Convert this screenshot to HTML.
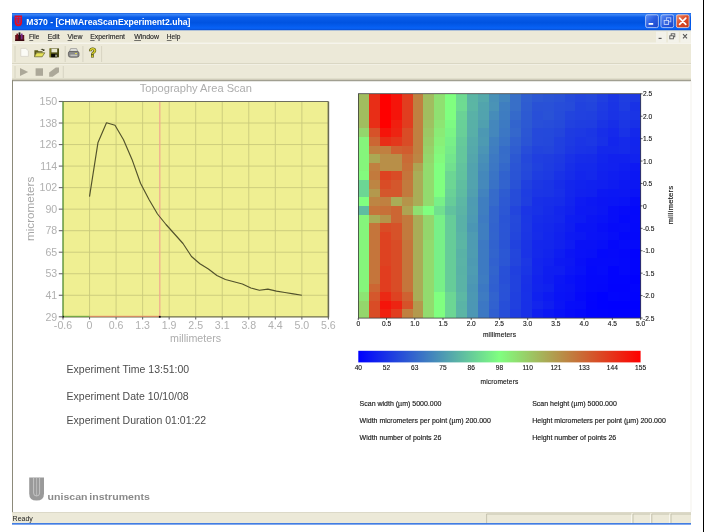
<!DOCTYPE html>
<html><head><meta charset="utf-8"><title>M370</title>
<style>
html,body{margin:0;padding:0;background:#fff;}
body{width:704px;height:532px;overflow:hidden;position:relative;font-family:"Liberation Sans",sans-serif;}
svg{position:absolute;left:0;top:0;display:block;filter:blur(0.5px);}
text{font-family:"Liberation Sans",sans-serif;}
</style></head><body>
<svg width="704" height="532" viewBox="0 0 704 532">
<defs>
<linearGradient id="tb" x1="0" y1="0" x2="0" y2="1">
<stop offset="0" stop-color="#1c64e0"/><stop offset="0.09" stop-color="#3a84f6"/><stop offset="0.24" stop-color="#0a5ce8"/>
<stop offset="0.55" stop-color="#0053e1"/><stop offset="0.86" stop-color="#0862f6"/><stop offset="1" stop-color="#0848c6"/>
</linearGradient>
<linearGradient id="bb" x1="0" y1="0" x2="1" y2="1">
<stop offset="0" stop-color="#5d8ff6"/><stop offset="0.5" stop-color="#2a5de0"/><stop offset="1" stop-color="#1c45c8"/>
</linearGradient>
<linearGradient id="rb" x1="0" y1="0" x2="1" y2="1">
<stop offset="0" stop-color="#f0906c"/><stop offset="0.5" stop-color="#dc4a26"/><stop offset="1" stop-color="#c43818"/>
</linearGradient>
<linearGradient id="cbar" x1="0" y1="0" x2="1" y2="0">
<stop offset="0" stop-color="#0000ff"/><stop offset="0.5" stop-color="#80ff80"/><stop offset="1" stop-color="#ff0000"/>
</linearGradient>
</defs>
<rect x="0" y="0" width="704" height="532" fill="#ffffff"/>
<!-- right black line -->
<!-- window chrome -->
<rect x="12" y="13" width="679" height="17.7" fill="url(#tb)"/>
<rect x="12" y="30.4" width="679" height="50.4" fill="#ece9d8"/>
<!-- title icon -->
<g>
<path d="M14.6,15.4 h7.5 v6.6 q0,4.2 -3.75,4.2 q-3.75,0 -3.75,-4.2 z" fill="#e40c22"/>
<path d="M16.9,18.6 v3.6 q0,1.6 1.5,1.6 q1.5,0 1.5,-1.6 v-3.6" fill="none" stroke="#3a4ed0" stroke-width="0.9"/>
<g fill="#5a50c8"><circle cx="16" cy="17.6" r="0.55"/><circle cx="17.6" cy="17.6" r="0.55"/><circle cx="19.2" cy="17.6" r="0.55"/><circle cx="20.8" cy="17.6" r="0.55"/></g>
</g>
<text x="26.2" y="24.9" font-size="9" font-weight="bold" fill="#ffffff" textLength="164.2" lengthAdjust="spacingAndGlyphs">M370 - [CHMAreaScanExperiment2.uha]</text>
<g>
<rect x="645.6" y="14.8" width="12.8" height="12.8" rx="1.8" fill="url(#bb)" stroke="#c4d4f8" stroke-width="0.8"/>
<rect x="648.6" y="23" width="4.6" height="1.8" fill="#fff"/>
<rect x="660.9" y="14.8" width="12.8" height="12.8" rx="1.8" fill="url(#bb)" stroke="#c4d4f8" stroke-width="0.8"/>
<rect x="666.4" y="17.8" width="4.4" height="4" fill="none" stroke="#b4c8f6" stroke-width="0.9"/>
<rect x="664.2" y="20.4" width="4.4" height="4" fill="#3a68e0" stroke="#c8d8fa" stroke-width="0.9"/>
<rect x="676.3" y="14.8" width="12.8" height="12.8" rx="1.8" fill="url(#rb)" stroke="#f6dcd2" stroke-width="0.8"/>
<path d="M679.6,18.1 l6.2,6.2 M685.8,18.1 l-6.2,6.2" stroke="#fff" stroke-width="1.7" stroke-linecap="round"/>
</g>
<g>
<g>
<rect x="15.2" y="35" width="9" height="5.8" fill="#5c1018"/>
<rect x="16.4" y="33.6" width="1.8" height="6" fill="#7a1020"/>
<rect x="18.6" y="32.4" width="1.8" height="7" fill="#201018"/>
<rect x="20.8" y="33.6" width="1.8" height="6" fill="#7a2a8a"/>
<rect x="15.2" y="39.6" width="9" height="1.4" fill="#3a0810"/>
</g>
<g font-size="8" fill="#222" stroke="#333" stroke-width="0.15">
<text x="28.9" y="39.2" textLength="10.4" lengthAdjust="spacingAndGlyphs">File</text>
<text x="47.8" y="39.2" textLength="11.8" lengthAdjust="spacingAndGlyphs">Edit</text>
<text x="67.6" y="39.2" textLength="14.8" lengthAdjust="spacingAndGlyphs">View</text>
<text x="90.2" y="39.2" textLength="34.8" lengthAdjust="spacingAndGlyphs">Experiment</text>
<text x="134.2" y="39.2" textLength="24.8" lengthAdjust="spacingAndGlyphs">Window</text>
<text x="166.8" y="39.2" textLength="13.6" lengthAdjust="spacingAndGlyphs">Help</text>
</g>
<g stroke="#1c1c1c" stroke-width="0.6">
<line x1="29.4" y1="40.5" x2="33.2" y2="40.5"/><line x1="47.8" y1="40.5" x2="52" y2="40.5"/>
<line x1="67.6" y1="40.5" x2="72.2" y2="40.5"/><line x1="90.2" y1="40.5" x2="94.6" y2="40.5"/>
<line x1="134.2" y1="40.5" x2="141" y2="40.5"/><line x1="166.8" y1="40.5" x2="171.6" y2="40.5"/>
</g>
<g fill="#f3f2ea"><rect x="656" y="31.6" width="10.2" height="11"/><rect x="668" y="31.6" width="10.8" height="11"/><rect x="680.4" y="31.6" width="10.4" height="11"/></g>
<g stroke="#555" stroke-width="0.9" fill="none">
<line x1="658.6" y1="38.4" x2="661.6" y2="38.4" stroke-width="1.2"/>
<rect x="671.2" y="33.8" width="3.6" height="3"/><rect x="669.8" y="35.8" width="3.6" height="3" fill="#f3f2ea"/>
<path d="M683,34.2 l4,4.2 M687,34.2 l-4,4.2" stroke-width="1.1"/>
</g>
</g>
<g>
<rect x="12" y="42.6" width="679" height="1.2" fill="#f8f7f0"/>
<rect x="12" y="63.2" width="679" height="0.8" fill="#d6d2c0"/>
<rect x="12" y="64" width="679" height="0.8" fill="#f4f2e8"/>
<rect x="12" y="78.6" width="679" height="1.6" fill="#d0ccba"/>
<g stroke="#d2cebc" stroke-width="0.8">
<line x1="15" y1="46" x2="15" y2="62"/><line x1="15" y1="66" x2="15" y2="78"/>
<line x1="65.2" y1="46" x2="65.2" y2="62"/><line x1="82.9" y1="46" x2="82.9" y2="62"/><line x1="101.6" y1="46" x2="101.6" y2="62"/>
<line x1="63.3" y1="66" x2="63.3" y2="78"/>
</g>
<!-- new -->
<path d="M20.8,48.4 h5 l2.6,2.4 v5.6 h-7.6 z" fill="#fbfbf6" stroke="#d2d0c4" stroke-width="0.7"/>
<!-- open -->
<path d="M34.4,50.2 h3.4 l0.8,1 h4 v1.4 h-6 l-2.2,4.2 z" fill="#5a5a18"/>
<path d="M36.6,52.8 h8.2 l-2.6,4 h-7.8 z" fill="#e6e25a" stroke="#4a4a18" stroke-width="0.6"/>
<path d="M40.4,49.4 q2,-1.4 3.4,0.2 l0.6,-0.6 v2 h-2 l0.7,-0.7 q-1,-1 -2.7,-0.9 z" fill="#3a3a20"/>
<!-- save -->
<rect x="49.6" y="48.4" width="9.4" height="8.9" fill="#4a4a12"/>
<rect x="51.4" y="48.8" width="5.8" height="3.6" fill="#e8e8d0"/>
<rect x="51.2" y="54" width="6" height="3.3" fill="#0a0a04"/>
<rect x="55.4" y="54.6" width="1.3" height="2.2" fill="#d8d8c0"/>
<rect x="49.6" y="48.4" width="1.2" height="8.9" fill="#8a8a20"/>
<!-- print -->
<path d="M70.6,48.6 h6 l1.2,3 h-8.4 z" fill="#e4e4e0" stroke="#7c7c7c" stroke-width="0.6"/>
<path d="M68.4,53 q0,-1.6 1.6,-1.6 h7.2 q1.8,0 1.8,1.8 v2.4 q0,1.6 -2.2,1.6 h-6.2 q-2.2,0 -2.2,-1.8 z" fill="#8a8a8a" stroke="#4c4c4c" stroke-width="0.7"/>
<rect x="70.4" y="54.6" width="6.8" height="1.6" fill="#c4c4c0"/>
<rect x="75" y="53" width="2" height="1" fill="#e0d850"/>
<!-- help -->
<text x="92.7" y="57.3" font-size="12" font-weight="bold" fill="#d6cf2c" stroke="#4a4a14" stroke-width="1.1" paint-order="stroke" text-anchor="middle">?</text>
<!-- toolbar2 -->
<path d="M20,68 l8.2,4 l-8.2,4.1 z" fill="#aca899"/>
<rect x="35.6" y="68.3" width="7.4" height="7.5" fill="#aca899"/>
<path d="M49.2,72.4 l6.6,-4.8 h3.2 v4.6 l-6.4,4.6 h-3.4 z" fill="#aca899"/>
</g>
<!-- client -->
<rect x="12" y="80.4" width="679" height="432" fill="#ffffff"/>
<rect x="12" y="80.2" width="679" height="1" fill="#8c8a7a"/>
<rect x="12" y="80.2" width="1" height="432" fill="#8c8a7a"/>
<rect x="690.6" y="81" width="0.8" height="431" fill="#efeee6"/>
<!-- status bar -->
<rect x="12" y="512.2" width="679" height="11.4" fill="#ece9d8"/>
<rect x="12" y="523.1" width="679" height="1.5" fill="#2f70e2"/>
<g>
<rect x="12" y="512.2" width="679" height="0.8" fill="#d8d4c2"/>
<text x="12.6" y="521.2" font-size="7.5" fill="#1c1c1c" textLength="20.2" lengthAdjust="spacingAndGlyphs">Ready</text>
<g fill="none" stroke-width="0.8">
<path d="M486.6,523 V514 H631.2" stroke="#bdb9a6"/><path d="M633,523 V514 H650" stroke="#bdb9a6"/><path d="M651.8,523 V514 H669.2" stroke="#bdb9a6"/><path d="M671,523 V514 H691" stroke="#bdb9a6"/>
<path d="M631.6,514.6 V523" stroke="#fbfaf4"/><path d="M650.4,514.6 V523" stroke="#fbfaf4"/><path d="M669.6,514.6 V523" stroke="#fbfaf4"/>
</g>
</g>

<!-- line chart -->
<text x="195.8" y="91.9" font-size="11.1" fill="#adadad" text-anchor="middle">Topography Area Scan</text>
<rect x="63.0" y="101.5" width="265.4" height="215.3" fill="#efef92"/>
<g stroke="#c9c97c" stroke-width="0.9" fill="none">
<line x1="89.54" y1="101.50" x2="89.54" y2="316.80"/>
<line x1="63.00" y1="123.03" x2="328.40" y2="123.03"/>
<line x1="116.08" y1="101.50" x2="116.08" y2="316.80"/>
<line x1="63.00" y1="144.56" x2="328.40" y2="144.56"/>
<line x1="142.62" y1="101.50" x2="142.62" y2="316.80"/>
<line x1="63.00" y1="166.09" x2="328.40" y2="166.09"/>
<line x1="169.16" y1="101.50" x2="169.16" y2="316.80"/>
<line x1="63.00" y1="187.62" x2="328.40" y2="187.62"/>
<line x1="195.70" y1="101.50" x2="195.70" y2="316.80"/>
<line x1="63.00" y1="209.15" x2="328.40" y2="209.15"/>
<line x1="222.24" y1="101.50" x2="222.24" y2="316.80"/>
<line x1="63.00" y1="230.68" x2="328.40" y2="230.68"/>
<line x1="248.78" y1="101.50" x2="248.78" y2="316.80"/>
<line x1="63.00" y1="252.21" x2="328.40" y2="252.21"/>
<line x1="275.32" y1="101.50" x2="275.32" y2="316.80"/>
<line x1="63.00" y1="273.74" x2="328.40" y2="273.74"/>
<line x1="301.86" y1="101.50" x2="301.86" y2="316.80"/>
<line x1="63.00" y1="295.27" x2="328.40" y2="295.27"/>
</g>
<line x1="159.8" y1="101.5" x2="159.8" y2="316.8" stroke="#f0a890" stroke-width="1.2"/>
<polyline points="89.5,196.6 98.0,142.4 106.5,122.8 115.0,125.3 123.5,139.8 132.0,159.4 140.5,183.3 149.0,199.5 157.5,214.0 166.0,224.5 174.5,234.0 183.0,243.5 191.5,256.5 199.9,263.7 208.4,269.0 216.9,275.5 225.4,279.5 233.9,281.8 242.4,284.0 250.9,288.0 259.4,290.3 267.9,289.1 276.4,291.1 284.9,292.5 293.4,293.9 301.9,295.2" fill="none" stroke="#52522c" stroke-width="1.15" stroke-linejoin="round"/>
<!-- borders -->
<line x1="63.0" y1="101.5" x2="328.4" y2="101.5" stroke="#6e6e5e" stroke-width="1.2"/>
<line x1="328.4" y1="101.5" x2="328.4" y2="317.40000000000003" stroke="#6a6a52" stroke-width="1.6"/>
<line x1="63.0" y1="316.8" x2="328.4" y2="316.8" stroke="#6e6e48" stroke-width="1.3"/>
<line x1="63.0" y1="101.5" x2="63.0" y2="316.8" stroke="#4e8a2e" stroke-width="1.3"/>
<line x1="63.0" y1="316.3" x2="89.53999999999999" y2="316.3" stroke="#6cb040" stroke-width="0.9"/>
<line x1="89.53999999999999" y1="316.3" x2="159.8" y2="316.3" stroke="#ee8a68" stroke-width="0.9"/>
<rect x="62.1" y="315.9" width="1.8" height="1.8" fill="#111"/>
<rect x="158.9" y="315.9" width="1.8" height="1.8" fill="#111"/>
<g font-size="10.6" fill="#b0b0b0">
<text x="57.2" y="105.20" text-anchor="end">150</text>
<line x1="58.8" y1="101.50" x2="63" y2="101.50" stroke="#6a6a6a" stroke-width="1.1"/>
<text x="57.2" y="126.73" text-anchor="end">138</text>
<line x1="58.8" y1="123.03" x2="63" y2="123.03" stroke="#6a6a6a" stroke-width="1.1"/>
<text x="57.2" y="148.26" text-anchor="end">126</text>
<line x1="58.8" y1="144.56" x2="63" y2="144.56" stroke="#6a6a6a" stroke-width="1.1"/>
<text x="57.2" y="169.79" text-anchor="end">114</text>
<line x1="58.8" y1="166.09" x2="63" y2="166.09" stroke="#6a6a6a" stroke-width="1.1"/>
<text x="57.2" y="191.32" text-anchor="end">102</text>
<line x1="58.8" y1="187.62" x2="63" y2="187.62" stroke="#6a6a6a" stroke-width="1.1"/>
<text x="57.2" y="212.85" text-anchor="end">90</text>
<line x1="58.8" y1="209.15" x2="63" y2="209.15" stroke="#6a6a6a" stroke-width="1.1"/>
<text x="57.2" y="234.38" text-anchor="end">78</text>
<line x1="58.8" y1="230.68" x2="63" y2="230.68" stroke="#6a6a6a" stroke-width="1.1"/>
<text x="57.2" y="255.91" text-anchor="end">65</text>
<line x1="58.8" y1="252.21" x2="63" y2="252.21" stroke="#6a6a6a" stroke-width="1.1"/>
<text x="57.2" y="277.44" text-anchor="end">53</text>
<line x1="58.8" y1="273.74" x2="63" y2="273.74" stroke="#6a6a6a" stroke-width="1.1"/>
<text x="57.2" y="298.97" text-anchor="end">41</text>
<line x1="58.8" y1="295.27" x2="63" y2="295.27" stroke="#6a6a6a" stroke-width="1.1"/>
<text x="57.2" y="320.50" text-anchor="end">29</text>
<line x1="58.8" y1="316.80" x2="63" y2="316.80" stroke="#6a6a6a" stroke-width="1.1"/>
<text x="63.00" y="329.4" text-anchor="middle">-0.6</text>
<line x1="63.00" y1="317" x2="63.00" y2="319.4" stroke="#6a6a6a" stroke-width="1.1"/>
<text x="89.54" y="329.4" text-anchor="middle">0</text>
<line x1="89.54" y1="317" x2="89.54" y2="319.4" stroke="#6a6a6a" stroke-width="1.1"/>
<text x="116.08" y="329.4" text-anchor="middle">0.6</text>
<line x1="116.08" y1="317" x2="116.08" y2="319.4" stroke="#6a6a6a" stroke-width="1.1"/>
<text x="142.62" y="329.4" text-anchor="middle">1.3</text>
<line x1="142.62" y1="317" x2="142.62" y2="319.4" stroke="#6a6a6a" stroke-width="1.1"/>
<text x="169.16" y="329.4" text-anchor="middle">1.9</text>
<line x1="169.16" y1="317" x2="169.16" y2="319.4" stroke="#6a6a6a" stroke-width="1.1"/>
<text x="195.70" y="329.4" text-anchor="middle">2.5</text>
<line x1="195.70" y1="317" x2="195.70" y2="319.4" stroke="#6a6a6a" stroke-width="1.1"/>
<text x="222.24" y="329.4" text-anchor="middle">3.1</text>
<line x1="222.24" y1="317" x2="222.24" y2="319.4" stroke="#6a6a6a" stroke-width="1.1"/>
<text x="248.78" y="329.4" text-anchor="middle">3.8</text>
<line x1="248.78" y1="317" x2="248.78" y2="319.4" stroke="#6a6a6a" stroke-width="1.1"/>
<text x="275.32" y="329.4" text-anchor="middle">4.4</text>
<line x1="275.32" y1="317" x2="275.32" y2="319.4" stroke="#6a6a6a" stroke-width="1.1"/>
<text x="301.86" y="329.4" text-anchor="middle">5.0</text>
<line x1="301.86" y1="317" x2="301.86" y2="319.4" stroke="#6a6a6a" stroke-width="1.1"/>
<text x="328.40" y="329.4" text-anchor="middle">5.6</text>
<line x1="328.40" y1="317" x2="328.40" y2="319.4" stroke="#6a6a6a" stroke-width="1.1"/>
</g>
<text x="195.6" y="341.8" font-size="10.7" fill="#adadad" text-anchor="middle">millimeters</text>
<text transform="translate(34.2,208.9) rotate(-90)" font-size="11.7" fill="#a6a6a6" text-anchor="middle">micrometers</text>

<!-- heatmap -->
<g shape-rendering="crispEdges">
<rect x="358.30" y="93.80" width="11.16" height="8.92" fill="#a1bd5f"/>
<rect x="369.16" y="93.80" width="11.16" height="8.92" fill="#e82e17"/>
<rect x="380.02" y="93.80" width="11.16" height="8.92" fill="#ff0000"/>
<rect x="390.87" y="93.80" width="11.16" height="8.92" fill="#f5140a"/>
<rect x="401.73" y="93.80" width="11.16" height="8.92" fill="#e13d1f"/>
<rect x="412.59" y="93.80" width="11.16" height="8.92" fill="#c08040"/>
<rect x="423.45" y="93.80" width="11.16" height="8.92" fill="#a1bd5f"/>
<rect x="434.30" y="93.80" width="11.16" height="8.92" fill="#8fe071"/>
<rect x="445.16" y="93.80" width="11.16" height="8.92" fill="#80ff80"/>
<rect x="456.02" y="93.80" width="11.16" height="8.92" fill="#6eda92"/>
<rect x="466.88" y="93.80" width="11.16" height="8.92" fill="#5bb5a5"/>
<rect x="477.73" y="93.80" width="11.16" height="8.92" fill="#55a9ab"/>
<rect x="488.59" y="93.80" width="11.16" height="8.92" fill="#4991b7"/>
<rect x="499.45" y="93.80" width="11.16" height="8.92" fill="#4385bd"/>
<rect x="510.31" y="93.80" width="11.16" height="8.92" fill="#386fc8"/>
<rect x="521.17" y="93.80" width="11.16" height="8.92" fill="#2f5ed0"/>
<rect x="532.02" y="93.80" width="11.16" height="8.92" fill="#2c57d4"/>
<rect x="542.88" y="93.80" width="11.16" height="8.92" fill="#2a54d5"/>
<rect x="553.74" y="93.80" width="11.16" height="8.92" fill="#2951d7"/>
<rect x="564.60" y="93.80" width="11.16" height="8.92" fill="#254ada"/>
<rect x="575.45" y="93.80" width="11.16" height="8.92" fill="#2345dd"/>
<rect x="586.31" y="93.80" width="11.16" height="8.92" fill="#2447dc"/>
<rect x="597.17" y="93.80" width="11.16" height="8.92" fill="#203fe0"/>
<rect x="608.03" y="93.80" width="11.16" height="8.92" fill="#1b36e4"/>
<rect x="618.88" y="93.80" width="11.16" height="8.92" fill="#1f3ee0"/>
<rect x="629.74" y="93.80" width="11.16" height="8.92" fill="#1d39e3"/>
<rect x="358.30" y="102.42" width="11.16" height="8.92" fill="#a1bd5f"/>
<rect x="369.16" y="102.42" width="11.16" height="8.92" fill="#e82e17"/>
<rect x="380.02" y="102.42" width="11.16" height="8.92" fill="#ff0000"/>
<rect x="390.87" y="102.42" width="11.16" height="8.92" fill="#f5140a"/>
<rect x="401.73" y="102.42" width="11.16" height="8.92" fill="#e13d1f"/>
<rect x="412.59" y="102.42" width="11.16" height="8.92" fill="#c08040"/>
<rect x="423.45" y="102.42" width="11.16" height="8.92" fill="#a1bd5f"/>
<rect x="434.30" y="102.42" width="11.16" height="8.92" fill="#8fe071"/>
<rect x="445.16" y="102.42" width="11.16" height="8.92" fill="#80ff80"/>
<rect x="456.02" y="102.42" width="11.16" height="8.92" fill="#6edb92"/>
<rect x="466.88" y="102.42" width="11.16" height="8.92" fill="#5bb6a4"/>
<rect x="477.73" y="102.42" width="11.16" height="8.92" fill="#52a4ad"/>
<rect x="488.59" y="102.42" width="11.16" height="8.92" fill="#4a93b6"/>
<rect x="499.45" y="102.42" width="11.16" height="8.92" fill="#3f7ec0"/>
<rect x="510.31" y="102.42" width="11.16" height="8.92" fill="#386fc8"/>
<rect x="521.17" y="102.42" width="11.16" height="8.92" fill="#2e5cd1"/>
<rect x="532.02" y="102.42" width="11.16" height="8.92" fill="#2951d6"/>
<rect x="542.88" y="102.42" width="11.16" height="8.92" fill="#2951d7"/>
<rect x="553.74" y="102.42" width="11.16" height="8.92" fill="#274dd9"/>
<rect x="564.60" y="102.42" width="11.16" height="8.92" fill="#264bda"/>
<rect x="575.45" y="102.42" width="11.16" height="8.92" fill="#2142de"/>
<rect x="586.31" y="102.42" width="11.16" height="8.92" fill="#2244dd"/>
<rect x="597.17" y="102.42" width="11.16" height="8.92" fill="#1e3be2"/>
<rect x="608.03" y="102.42" width="11.16" height="8.92" fill="#1a34e5"/>
<rect x="618.88" y="102.42" width="11.16" height="8.92" fill="#1e3ce1"/>
<rect x="629.74" y="102.42" width="11.16" height="8.92" fill="#1932e6"/>
<rect x="358.30" y="111.05" width="11.16" height="8.92" fill="#a1bd5f"/>
<rect x="369.16" y="111.05" width="11.16" height="8.92" fill="#e82e17"/>
<rect x="380.02" y="111.05" width="11.16" height="8.92" fill="#ff0000"/>
<rect x="390.87" y="111.05" width="11.16" height="8.92" fill="#f5140a"/>
<rect x="401.73" y="111.05" width="11.16" height="8.92" fill="#e13d1f"/>
<rect x="412.59" y="111.05" width="11.16" height="8.92" fill="#c08040"/>
<rect x="423.45" y="111.05" width="11.16" height="8.92" fill="#a1bd5f"/>
<rect x="434.30" y="111.05" width="11.16" height="8.92" fill="#8fe071"/>
<rect x="445.16" y="111.05" width="11.16" height="8.92" fill="#80ff80"/>
<rect x="456.02" y="111.05" width="11.16" height="8.92" fill="#6ad296"/>
<rect x="466.88" y="111.05" width="11.16" height="8.92" fill="#59b1a7"/>
<rect x="477.73" y="111.05" width="11.16" height="8.92" fill="#52a3ae"/>
<rect x="488.59" y="111.05" width="11.16" height="8.92" fill="#468cb9"/>
<rect x="499.45" y="111.05" width="11.16" height="8.92" fill="#3e7cc1"/>
<rect x="510.31" y="111.05" width="11.16" height="8.92" fill="#356aca"/>
<rect x="521.17" y="111.05" width="11.16" height="8.92" fill="#2d5ad2"/>
<rect x="532.02" y="111.05" width="11.16" height="8.92" fill="#284fd8"/>
<rect x="542.88" y="111.05" width="11.16" height="8.92" fill="#2952d6"/>
<rect x="553.74" y="111.05" width="11.16" height="8.92" fill="#264cd9"/>
<rect x="564.60" y="111.05" width="11.16" height="8.92" fill="#2244dd"/>
<rect x="575.45" y="111.05" width="11.16" height="8.92" fill="#2141df"/>
<rect x="586.31" y="111.05" width="11.16" height="8.92" fill="#2040df"/>
<rect x="597.17" y="111.05" width="11.16" height="8.92" fill="#1d39e3"/>
<rect x="608.03" y="111.05" width="11.16" height="8.92" fill="#1a33e5"/>
<rect x="618.88" y="111.05" width="11.16" height="8.92" fill="#1b37e4"/>
<rect x="629.74" y="111.05" width="11.16" height="8.92" fill="#1a34e5"/>
<rect x="358.30" y="119.67" width="11.16" height="8.92" fill="#a1bd5f"/>
<rect x="369.16" y="119.67" width="11.16" height="8.92" fill="#e82e17"/>
<rect x="380.02" y="119.67" width="11.16" height="8.92" fill="#ff0000"/>
<rect x="390.87" y="119.67" width="11.16" height="8.92" fill="#f01f0f"/>
<rect x="401.73" y="119.67" width="11.16" height="8.92" fill="#e13d1f"/>
<rect x="412.59" y="119.67" width="11.16" height="8.92" fill="#c08040"/>
<rect x="423.45" y="119.67" width="11.16" height="8.92" fill="#9ec261"/>
<rect x="434.30" y="119.67" width="11.16" height="8.92" fill="#8de573"/>
<rect x="445.16" y="119.67" width="11.16" height="8.92" fill="#7dfa83"/>
<rect x="456.02" y="119.67" width="11.16" height="8.92" fill="#68d098"/>
<rect x="466.88" y="119.67" width="11.16" height="8.92" fill="#58b0a7"/>
<rect x="477.73" y="119.67" width="11.16" height="8.92" fill="#50a0af"/>
<rect x="488.59" y="119.67" width="11.16" height="8.92" fill="#4487bc"/>
<rect x="499.45" y="119.67" width="11.16" height="8.92" fill="#3d7ac2"/>
<rect x="510.31" y="119.67" width="11.16" height="8.92" fill="#3264cd"/>
<rect x="521.17" y="119.67" width="11.16" height="8.92" fill="#2c59d3"/>
<rect x="532.02" y="119.67" width="11.16" height="8.92" fill="#284fd8"/>
<rect x="542.88" y="119.67" width="11.16" height="8.92" fill="#274dd9"/>
<rect x="553.74" y="119.67" width="11.16" height="8.92" fill="#254ada"/>
<rect x="564.60" y="119.67" width="11.16" height="8.92" fill="#2141df"/>
<rect x="575.45" y="119.67" width="11.16" height="8.92" fill="#1f3ee0"/>
<rect x="586.31" y="119.67" width="11.16" height="8.92" fill="#1f3de1"/>
<rect x="597.17" y="119.67" width="11.16" height="8.92" fill="#1a34e5"/>
<rect x="608.03" y="119.67" width="11.16" height="8.92" fill="#172ee8"/>
<rect x="618.88" y="119.67" width="11.16" height="8.92" fill="#1b36e4"/>
<rect x="629.74" y="119.67" width="11.16" height="8.92" fill="#1830e7"/>
<rect x="358.30" y="128.29" width="11.16" height="8.92" fill="#94d66c"/>
<rect x="369.16" y="128.29" width="11.16" height="8.92" fill="#d65229"/>
<rect x="380.02" y="128.29" width="11.16" height="8.92" fill="#f5140a"/>
<rect x="390.87" y="128.29" width="11.16" height="8.92" fill="#ed2412"/>
<rect x="401.73" y="128.29" width="11.16" height="8.92" fill="#d94c26"/>
<rect x="412.59" y="128.29" width="11.16" height="8.92" fill="#c08040"/>
<rect x="423.45" y="128.29" width="11.16" height="8.92" fill="#9cc764"/>
<rect x="434.30" y="128.29" width="11.16" height="8.92" fill="#8aeb76"/>
<rect x="445.16" y="128.29" width="11.16" height="8.92" fill="#7bf585"/>
<rect x="456.02" y="128.29" width="11.16" height="8.92" fill="#68cf98"/>
<rect x="466.88" y="128.29" width="11.16" height="8.92" fill="#58afa8"/>
<rect x="477.73" y="128.29" width="11.16" height="8.92" fill="#4c98b3"/>
<rect x="488.59" y="128.29" width="11.16" height="8.92" fill="#4487bc"/>
<rect x="499.45" y="128.29" width="11.16" height="8.92" fill="#3c77c4"/>
<rect x="510.31" y="128.29" width="11.16" height="8.92" fill="#3467cc"/>
<rect x="521.17" y="128.29" width="11.16" height="8.92" fill="#2b56d4"/>
<rect x="532.02" y="128.29" width="11.16" height="8.92" fill="#2549db"/>
<rect x="542.88" y="128.29" width="11.16" height="8.92" fill="#2449db"/>
<rect x="553.74" y="128.29" width="11.16" height="8.92" fill="#2345dc"/>
<rect x="564.60" y="128.29" width="11.16" height="8.92" fill="#1e3be1"/>
<rect x="575.45" y="128.29" width="11.16" height="8.92" fill="#1d39e3"/>
<rect x="586.31" y="128.29" width="11.16" height="8.92" fill="#1b36e4"/>
<rect x="597.17" y="128.29" width="11.16" height="8.92" fill="#172ee8"/>
<rect x="608.03" y="128.29" width="11.16" height="8.92" fill="#1529eb"/>
<rect x="618.88" y="128.29" width="11.16" height="8.92" fill="#1932e6"/>
<rect x="629.74" y="128.29" width="11.16" height="8.92" fill="#1428eb"/>
<rect x="358.30" y="136.92" width="11.16" height="8.92" fill="#85f57b"/>
<rect x="369.16" y="136.92" width="11.16" height="8.92" fill="#cc6633"/>
<rect x="380.02" y="136.92" width="11.16" height="8.92" fill="#e82e17"/>
<rect x="390.87" y="136.92" width="11.16" height="8.92" fill="#e3381c"/>
<rect x="401.73" y="136.92" width="11.16" height="8.92" fill="#d94c26"/>
<rect x="412.59" y="136.92" width="11.16" height="8.92" fill="#c08040"/>
<rect x="423.45" y="136.92" width="11.16" height="8.92" fill="#99cc66"/>
<rect x="434.30" y="136.92" width="11.16" height="8.92" fill="#88f078"/>
<rect x="445.16" y="136.92" width="11.16" height="8.92" fill="#78f088"/>
<rect x="456.02" y="136.92" width="11.16" height="8.92" fill="#65ca9a"/>
<rect x="466.88" y="136.92" width="11.16" height="8.92" fill="#56abaa"/>
<rect x="477.73" y="136.92" width="11.16" height="8.92" fill="#4d9ab2"/>
<rect x="488.59" y="136.92" width="11.16" height="8.92" fill="#4080bf"/>
<rect x="499.45" y="136.92" width="11.16" height="8.92" fill="#3a73c6"/>
<rect x="510.31" y="136.92" width="11.16" height="8.92" fill="#3161cf"/>
<rect x="521.17" y="136.92" width="11.16" height="8.92" fill="#2a54d5"/>
<rect x="532.02" y="136.92" width="11.16" height="8.92" fill="#2549db"/>
<rect x="542.88" y="136.92" width="11.16" height="8.92" fill="#2448db"/>
<rect x="553.74" y="136.92" width="11.16" height="8.92" fill="#2040df"/>
<rect x="564.60" y="136.92" width="11.16" height="8.92" fill="#1d3ae2"/>
<rect x="575.45" y="136.92" width="11.16" height="8.92" fill="#1b35e5"/>
<rect x="586.31" y="136.92" width="11.16" height="8.92" fill="#1c37e4"/>
<rect x="597.17" y="136.92" width="11.16" height="8.92" fill="#1830e7"/>
<rect x="608.03" y="136.92" width="11.16" height="8.92" fill="#1326ec"/>
<rect x="618.88" y="136.92" width="11.16" height="8.92" fill="#152aea"/>
<rect x="629.74" y="136.92" width="11.16" height="8.92" fill="#1225ed"/>
<rect x="358.30" y="145.54" width="11.16" height="8.92" fill="#85f57b"/>
<rect x="369.16" y="145.54" width="11.16" height="8.92" fill="#c08040"/>
<rect x="380.02" y="145.54" width="11.16" height="8.92" fill="#c08040"/>
<rect x="390.87" y="145.54" width="11.16" height="8.92" fill="#cf6131"/>
<rect x="401.73" y="145.54" width="11.16" height="8.92" fill="#d15c2e"/>
<rect x="412.59" y="145.54" width="11.16" height="8.92" fill="#c08040"/>
<rect x="423.45" y="145.54" width="11.16" height="8.92" fill="#97d169"/>
<rect x="434.30" y="145.54" width="11.16" height="8.92" fill="#85f57b"/>
<rect x="445.16" y="145.54" width="11.16" height="8.92" fill="#76eb8a"/>
<rect x="456.02" y="145.54" width="11.16" height="8.92" fill="#64c79c"/>
<rect x="466.88" y="145.54" width="11.16" height="8.92" fill="#55a9ab"/>
<rect x="477.73" y="145.54" width="11.16" height="8.92" fill="#4b95b5"/>
<rect x="488.59" y="145.54" width="11.16" height="8.92" fill="#3f7dc1"/>
<rect x="499.45" y="145.54" width="11.16" height="8.92" fill="#366cc9"/>
<rect x="510.31" y="145.54" width="11.16" height="8.92" fill="#2f5dd1"/>
<rect x="521.17" y="145.54" width="11.16" height="8.92" fill="#274dd9"/>
<rect x="532.02" y="145.54" width="11.16" height="8.92" fill="#2244dd"/>
<rect x="542.88" y="145.54" width="11.16" height="8.92" fill="#2345dc"/>
<rect x="553.74" y="145.54" width="11.16" height="8.92" fill="#203fe0"/>
<rect x="564.60" y="145.54" width="11.16" height="8.92" fill="#1c37e3"/>
<rect x="575.45" y="145.54" width="11.16" height="8.92" fill="#1a33e6"/>
<rect x="586.31" y="145.54" width="11.16" height="8.92" fill="#1932e6"/>
<rect x="597.17" y="145.54" width="11.16" height="8.92" fill="#1428eb"/>
<rect x="608.03" y="145.54" width="11.16" height="8.92" fill="#1428eb"/>
<rect x="618.88" y="145.54" width="11.16" height="8.92" fill="#152aea"/>
<rect x="629.74" y="145.54" width="11.16" height="8.92" fill="#1325ec"/>
<rect x="358.30" y="154.16" width="11.16" height="8.92" fill="#85f57b"/>
<rect x="369.16" y="154.16" width="11.16" height="8.92" fill="#aba854"/>
<rect x="380.02" y="154.16" width="11.16" height="8.92" fill="#b88f48"/>
<rect x="390.87" y="154.16" width="11.16" height="8.92" fill="#b88f48"/>
<rect x="401.73" y="154.16" width="11.16" height="8.92" fill="#ca6b36"/>
<rect x="412.59" y="154.16" width="11.16" height="8.92" fill="#bd8543"/>
<rect x="423.45" y="154.16" width="11.16" height="8.92" fill="#94d66c"/>
<rect x="434.30" y="154.16" width="11.16" height="8.92" fill="#83fa7d"/>
<rect x="445.16" y="154.16" width="11.16" height="8.92" fill="#73e68d"/>
<rect x="456.02" y="154.16" width="11.16" height="8.92" fill="#64c79c"/>
<rect x="466.88" y="154.16" width="11.16" height="8.92" fill="#54a6ac"/>
<rect x="477.73" y="154.16" width="11.16" height="8.92" fill="#4890b7"/>
<rect x="488.59" y="154.16" width="11.16" height="8.92" fill="#3d79c3"/>
<rect x="499.45" y="154.16" width="11.16" height="8.92" fill="#376dc9"/>
<rect x="510.31" y="154.16" width="11.16" height="8.92" fill="#2c58d3"/>
<rect x="521.17" y="154.16" width="11.16" height="8.92" fill="#2448db"/>
<rect x="532.02" y="154.16" width="11.16" height="8.92" fill="#203fe0"/>
<rect x="542.88" y="154.16" width="11.16" height="8.92" fill="#1f3de0"/>
<rect x="553.74" y="154.16" width="11.16" height="8.92" fill="#1d39e2"/>
<rect x="564.60" y="154.16" width="11.16" height="8.92" fill="#1931e7"/>
<rect x="575.45" y="154.16" width="11.16" height="8.92" fill="#162ce9"/>
<rect x="586.31" y="154.16" width="11.16" height="8.92" fill="#162be9"/>
<rect x="597.17" y="154.16" width="11.16" height="8.92" fill="#1225ed"/>
<rect x="608.03" y="154.16" width="11.16" height="8.92" fill="#1121ee"/>
<rect x="618.88" y="154.16" width="11.16" height="8.92" fill="#1121ee"/>
<rect x="629.74" y="154.16" width="11.16" height="8.92" fill="#1122ee"/>
<rect x="358.30" y="162.78" width="11.16" height="8.92" fill="#85f57b"/>
<rect x="369.16" y="162.78" width="11.16" height="8.92" fill="#c08040"/>
<rect x="380.02" y="162.78" width="11.16" height="8.92" fill="#b88f48"/>
<rect x="390.87" y="162.78" width="11.16" height="8.92" fill="#b88f48"/>
<rect x="401.73" y="162.78" width="11.16" height="8.92" fill="#c77038"/>
<rect x="412.59" y="162.78" width="11.16" height="8.92" fill="#aea352"/>
<rect x="423.45" y="162.78" width="11.16" height="8.92" fill="#92db6e"/>
<rect x="434.30" y="162.78" width="11.16" height="8.92" fill="#80ff80"/>
<rect x="445.16" y="162.78" width="11.16" height="8.92" fill="#71e08f"/>
<rect x="456.02" y="162.78" width="11.16" height="8.92" fill="#62c39e"/>
<rect x="466.88" y="162.78" width="11.16" height="8.92" fill="#52a3ae"/>
<rect x="477.73" y="162.78" width="11.16" height="8.92" fill="#468cb9"/>
<rect x="488.59" y="162.78" width="11.16" height="8.92" fill="#3c77c4"/>
<rect x="499.45" y="162.78" width="11.16" height="8.92" fill="#3468cb"/>
<rect x="510.31" y="162.78" width="11.16" height="8.92" fill="#2b55d5"/>
<rect x="521.17" y="162.78" width="11.16" height="8.92" fill="#254ada"/>
<rect x="532.02" y="162.78" width="11.16" height="8.92" fill="#2041df"/>
<rect x="542.88" y="162.78" width="11.16" height="8.92" fill="#1e3ce1"/>
<rect x="553.74" y="162.78" width="11.16" height="8.92" fill="#1c37e4"/>
<rect x="564.60" y="162.78" width="11.16" height="8.92" fill="#172ee8"/>
<rect x="575.45" y="162.78" width="11.16" height="8.92" fill="#1429eb"/>
<rect x="586.31" y="162.78" width="11.16" height="8.92" fill="#1429eb"/>
<rect x="597.17" y="162.78" width="11.16" height="8.92" fill="#1123ee"/>
<rect x="608.03" y="162.78" width="11.16" height="8.92" fill="#1121ef"/>
<rect x="618.88" y="162.78" width="11.16" height="8.92" fill="#0f1ef0"/>
<rect x="629.74" y="162.78" width="11.16" height="8.92" fill="#0d19f3"/>
<rect x="358.30" y="171.41" width="11.16" height="8.92" fill="#83fa7d"/>
<rect x="369.16" y="171.41" width="11.16" height="8.92" fill="#c27a3d"/>
<rect x="380.02" y="171.41" width="11.16" height="8.92" fill="#de4221"/>
<rect x="390.87" y="171.41" width="11.16" height="8.92" fill="#d94c26"/>
<rect x="401.73" y="171.41" width="11.16" height="8.92" fill="#c5753b"/>
<rect x="412.59" y="171.41" width="11.16" height="8.92" fill="#a9ad57"/>
<rect x="423.45" y="171.41" width="11.16" height="8.92" fill="#92db6e"/>
<rect x="434.30" y="171.41" width="11.16" height="8.92" fill="#80ff80"/>
<rect x="445.16" y="171.41" width="11.16" height="8.92" fill="#6cd694"/>
<rect x="456.02" y="171.41" width="11.16" height="8.92" fill="#61c29e"/>
<rect x="466.88" y="171.41" width="11.16" height="8.92" fill="#52a3ae"/>
<rect x="477.73" y="171.41" width="11.16" height="8.92" fill="#4488bb"/>
<rect x="488.59" y="171.41" width="11.16" height="8.92" fill="#3a74c5"/>
<rect x="499.45" y="171.41" width="11.16" height="8.92" fill="#3162ce"/>
<rect x="510.31" y="171.41" width="11.16" height="8.92" fill="#2a54d5"/>
<rect x="521.17" y="171.41" width="11.16" height="8.92" fill="#2448db"/>
<rect x="532.02" y="171.41" width="11.16" height="8.92" fill="#1e3de1"/>
<rect x="542.88" y="171.41" width="11.16" height="8.92" fill="#1d3ae2"/>
<rect x="553.74" y="171.41" width="11.16" height="8.92" fill="#1932e6"/>
<rect x="564.60" y="171.41" width="11.16" height="8.92" fill="#162ce9"/>
<rect x="575.45" y="171.41" width="11.16" height="8.92" fill="#1326ec"/>
<rect x="586.31" y="171.41" width="11.16" height="8.92" fill="#1428eb"/>
<rect x="597.17" y="171.41" width="11.16" height="8.92" fill="#1121ee"/>
<rect x="608.03" y="171.41" width="11.16" height="8.92" fill="#0f1ef0"/>
<rect x="618.88" y="171.41" width="11.16" height="8.92" fill="#0e1bf1"/>
<rect x="629.74" y="171.41" width="11.16" height="8.92" fill="#0b17f4"/>
<rect x="358.30" y="180.03" width="11.16" height="8.92" fill="#6cd694"/>
<rect x="369.16" y="180.03" width="11.16" height="8.92" fill="#bd8543"/>
<rect x="380.02" y="180.03" width="11.16" height="8.92" fill="#d94c26"/>
<rect x="390.87" y="180.03" width="11.16" height="8.92" fill="#d4572c"/>
<rect x="401.73" y="180.03" width="11.16" height="8.92" fill="#c27a3d"/>
<rect x="412.59" y="180.03" width="11.16" height="8.92" fill="#a9ad57"/>
<rect x="423.45" y="180.03" width="11.16" height="8.92" fill="#92db6e"/>
<rect x="434.30" y="180.03" width="11.16" height="8.92" fill="#80ff80"/>
<rect x="445.16" y="180.03" width="11.16" height="8.92" fill="#6cd694"/>
<rect x="456.02" y="180.03" width="11.16" height="8.92" fill="#5fbea0"/>
<rect x="466.88" y="180.03" width="11.16" height="8.92" fill="#52a3ae"/>
<rect x="477.73" y="180.03" width="11.16" height="8.92" fill="#4589bb"/>
<rect x="488.59" y="180.03" width="11.16" height="8.92" fill="#3972c6"/>
<rect x="499.45" y="180.03" width="11.16" height="8.92" fill="#3263ce"/>
<rect x="510.31" y="180.03" width="11.16" height="8.92" fill="#2952d6"/>
<rect x="521.17" y="180.03" width="11.16" height="8.92" fill="#2040df"/>
<rect x="532.02" y="180.03" width="11.16" height="8.92" fill="#1c37e3"/>
<rect x="542.88" y="180.03" width="11.16" height="8.92" fill="#1a34e5"/>
<rect x="553.74" y="180.03" width="11.16" height="8.92" fill="#172de8"/>
<rect x="564.60" y="180.03" width="11.16" height="8.92" fill="#1326ec"/>
<rect x="575.45" y="180.03" width="11.16" height="8.92" fill="#1123ee"/>
<rect x="586.31" y="180.03" width="11.16" height="8.92" fill="#1021ef"/>
<rect x="597.17" y="180.03" width="11.16" height="8.92" fill="#101ff0"/>
<rect x="608.03" y="180.03" width="11.16" height="8.92" fill="#0e1cf1"/>
<rect x="618.88" y="180.03" width="11.16" height="8.92" fill="#0c18f3"/>
<rect x="629.74" y="180.03" width="11.16" height="8.92" fill="#0c17f3"/>
<rect x="358.30" y="188.65" width="11.16" height="8.92" fill="#6cd694"/>
<rect x="369.16" y="188.65" width="11.16" height="8.92" fill="#b3994d"/>
<rect x="380.02" y="188.65" width="11.16" height="8.92" fill="#d4572c"/>
<rect x="390.87" y="188.65" width="11.16" height="8.92" fill="#d4572c"/>
<rect x="401.73" y="188.65" width="11.16" height="8.92" fill="#c27a3d"/>
<rect x="412.59" y="188.65" width="11.16" height="8.92" fill="#a9ad57"/>
<rect x="423.45" y="188.65" width="11.16" height="8.92" fill="#92db6e"/>
<rect x="434.30" y="188.65" width="11.16" height="8.92" fill="#80ff80"/>
<rect x="445.16" y="188.65" width="11.16" height="8.92" fill="#69d197"/>
<rect x="456.02" y="188.65" width="11.16" height="8.92" fill="#5ebca1"/>
<rect x="466.88" y="188.65" width="11.16" height="8.92" fill="#51a0af"/>
<rect x="477.73" y="188.65" width="11.16" height="8.92" fill="#4283be"/>
<rect x="488.59" y="188.65" width="11.16" height="8.92" fill="#366bca"/>
<rect x="499.45" y="188.65" width="11.16" height="8.92" fill="#2e5cd1"/>
<rect x="510.31" y="188.65" width="11.16" height="8.92" fill="#264cd9"/>
<rect x="521.17" y="188.65" width="11.16" height="8.92" fill="#1e3de1"/>
<rect x="532.02" y="188.65" width="11.16" height="8.92" fill="#1b35e5"/>
<rect x="542.88" y="188.65" width="11.16" height="8.92" fill="#1a34e5"/>
<rect x="553.74" y="188.65" width="11.16" height="8.92" fill="#182fe8"/>
<rect x="564.60" y="188.65" width="11.16" height="8.92" fill="#1326ec"/>
<rect x="575.45" y="188.65" width="11.16" height="8.92" fill="#1121ee"/>
<rect x="586.31" y="188.65" width="11.16" height="8.92" fill="#1020ef"/>
<rect x="597.17" y="188.65" width="11.16" height="8.92" fill="#0c18f3"/>
<rect x="608.03" y="188.65" width="11.16" height="8.92" fill="#0b17f4"/>
<rect x="618.88" y="188.65" width="11.16" height="8.92" fill="#0c17f3"/>
<rect x="629.74" y="188.65" width="11.16" height="8.92" fill="#0a13f6"/>
<rect x="358.30" y="197.28" width="11.16" height="8.92" fill="#80ff80"/>
<rect x="369.16" y="197.28" width="11.16" height="8.92" fill="#bd8543"/>
<rect x="380.02" y="197.28" width="11.16" height="8.92" fill="#c08040"/>
<rect x="390.87" y="197.28" width="11.16" height="8.92" fill="#a9ad57"/>
<rect x="401.73" y="197.28" width="11.16" height="8.92" fill="#b5944a"/>
<rect x="412.59" y="197.28" width="11.16" height="8.92" fill="#a9ad57"/>
<rect x="423.45" y="197.28" width="11.16" height="8.92" fill="#92db6e"/>
<rect x="434.30" y="197.28" width="11.16" height="8.92" fill="#78f088"/>
<rect x="445.16" y="197.28" width="11.16" height="8.92" fill="#66cc99"/>
<rect x="456.02" y="197.28" width="11.16" height="8.92" fill="#5cb7a4"/>
<rect x="466.88" y="197.28" width="11.16" height="8.92" fill="#4e9bb2"/>
<rect x="477.73" y="197.28" width="11.16" height="8.92" fill="#3f7ec0"/>
<rect x="488.59" y="197.28" width="11.16" height="8.92" fill="#366bca"/>
<rect x="499.45" y="197.28" width="11.16" height="8.92" fill="#2d59d3"/>
<rect x="510.31" y="197.28" width="11.16" height="8.92" fill="#264cd9"/>
<rect x="521.17" y="197.28" width="11.16" height="8.92" fill="#1f3ee0"/>
<rect x="532.02" y="197.28" width="11.16" height="8.92" fill="#1830e7"/>
<rect x="542.88" y="197.28" width="11.16" height="8.92" fill="#172ee8"/>
<rect x="553.74" y="197.28" width="11.16" height="8.92" fill="#162ce9"/>
<rect x="564.60" y="197.28" width="11.16" height="8.92" fill="#1224ed"/>
<rect x="575.45" y="197.28" width="11.16" height="8.92" fill="#0e1bf2"/>
<rect x="586.31" y="197.28" width="11.16" height="8.92" fill="#0c18f3"/>
<rect x="597.17" y="197.28" width="11.16" height="8.92" fill="#0b15f4"/>
<rect x="608.03" y="197.28" width="11.16" height="8.92" fill="#0a15f5"/>
<rect x="618.88" y="197.28" width="11.16" height="8.92" fill="#0913f6"/>
<rect x="629.74" y="197.28" width="11.16" height="8.92" fill="#060cf9"/>
<rect x="358.30" y="205.90" width="11.16" height="8.92" fill="#5fbda1"/>
<rect x="369.16" y="205.90" width="11.16" height="8.92" fill="#c5753b"/>
<rect x="380.02" y="205.90" width="11.16" height="8.92" fill="#c77038"/>
<rect x="390.87" y="205.90" width="11.16" height="8.92" fill="#cc6633"/>
<rect x="401.73" y="205.90" width="11.16" height="8.92" fill="#aea352"/>
<rect x="412.59" y="205.90" width="11.16" height="8.92" fill="#8fe071"/>
<rect x="423.45" y="205.90" width="11.16" height="8.92" fill="#80ff80"/>
<rect x="434.30" y="205.90" width="11.16" height="8.92" fill="#71e08f"/>
<rect x="445.16" y="205.90" width="11.16" height="8.92" fill="#61c29e"/>
<rect x="456.02" y="205.90" width="11.16" height="8.92" fill="#5bb4a5"/>
<rect x="466.88" y="205.90" width="11.16" height="8.92" fill="#4e9cb1"/>
<rect x="477.73" y="205.90" width="11.16" height="8.92" fill="#3f7ec0"/>
<rect x="488.59" y="205.90" width="11.16" height="8.92" fill="#3365cd"/>
<rect x="499.45" y="205.90" width="11.16" height="8.92" fill="#2c57d4"/>
<rect x="510.31" y="205.90" width="11.16" height="8.92" fill="#2345dd"/>
<rect x="521.17" y="205.90" width="11.16" height="8.92" fill="#1b35e5"/>
<rect x="532.02" y="205.90" width="11.16" height="8.92" fill="#1831e7"/>
<rect x="542.88" y="205.90" width="11.16" height="8.92" fill="#162ce9"/>
<rect x="553.74" y="205.90" width="11.16" height="8.92" fill="#1326ec"/>
<rect x="564.60" y="205.90" width="11.16" height="8.92" fill="#1121ee"/>
<rect x="575.45" y="205.90" width="11.16" height="8.92" fill="#0d19f3"/>
<rect x="586.31" y="205.90" width="11.16" height="8.92" fill="#0d19f2"/>
<rect x="597.17" y="205.90" width="11.16" height="8.92" fill="#0b16f4"/>
<rect x="608.03" y="205.90" width="11.16" height="8.92" fill="#070ef8"/>
<rect x="618.88" y="205.90" width="11.16" height="8.92" fill="#060bf9"/>
<rect x="629.74" y="205.90" width="11.16" height="8.92" fill="#0409fb"/>
<rect x="358.30" y="214.52" width="11.16" height="8.92" fill="#85f57b"/>
<rect x="369.16" y="214.52" width="11.16" height="8.92" fill="#a9ad57"/>
<rect x="380.02" y="214.52" width="11.16" height="8.92" fill="#b5944a"/>
<rect x="390.87" y="214.52" width="11.16" height="8.92" fill="#cc6633"/>
<rect x="401.73" y="214.52" width="11.16" height="8.92" fill="#c27a3d"/>
<rect x="412.59" y="214.52" width="11.16" height="8.92" fill="#a9ad57"/>
<rect x="423.45" y="214.52" width="11.16" height="8.92" fill="#94d66c"/>
<rect x="434.30" y="214.52" width="11.16" height="8.92" fill="#78f088"/>
<rect x="445.16" y="214.52" width="11.16" height="8.92" fill="#66cc99"/>
<rect x="456.02" y="214.52" width="11.16" height="8.92" fill="#59b1a7"/>
<rect x="466.88" y="214.52" width="11.16" height="8.92" fill="#4d9ab3"/>
<rect x="477.73" y="214.52" width="11.16" height="8.92" fill="#3e7bc2"/>
<rect x="488.59" y="214.52" width="11.16" height="8.92" fill="#3365cd"/>
<rect x="499.45" y="214.52" width="11.16" height="8.92" fill="#2a54d5"/>
<rect x="510.31" y="214.52" width="11.16" height="8.92" fill="#2549db"/>
<rect x="521.17" y="214.52" width="11.16" height="8.92" fill="#1b37e4"/>
<rect x="532.02" y="214.52" width="11.16" height="8.92" fill="#162de9"/>
<rect x="542.88" y="214.52" width="11.16" height="8.92" fill="#152aea"/>
<rect x="553.74" y="214.52" width="11.16" height="8.92" fill="#1427ec"/>
<rect x="564.60" y="214.52" width="11.16" height="8.92" fill="#0e1df1"/>
<rect x="575.45" y="214.52" width="11.16" height="8.92" fill="#0d1bf2"/>
<rect x="586.31" y="214.52" width="11.16" height="8.92" fill="#0b15f4"/>
<rect x="597.17" y="214.52" width="11.16" height="8.92" fill="#0913f6"/>
<rect x="608.03" y="214.52" width="11.16" height="8.92" fill="#070ef8"/>
<rect x="618.88" y="214.52" width="11.16" height="8.92" fill="#0409fb"/>
<rect x="629.74" y="214.52" width="11.16" height="8.92" fill="#0509fb"/>
<rect x="358.30" y="223.15" width="11.16" height="8.92" fill="#85f57b"/>
<rect x="369.16" y="223.15" width="11.16" height="8.92" fill="#c5753b"/>
<rect x="380.02" y="223.15" width="11.16" height="8.92" fill="#d94c26"/>
<rect x="390.87" y="223.15" width="11.16" height="8.92" fill="#d65229"/>
<rect x="401.73" y="223.15" width="11.16" height="8.92" fill="#c27a3d"/>
<rect x="412.59" y="223.15" width="11.16" height="8.92" fill="#a9ad57"/>
<rect x="423.45" y="223.15" width="11.16" height="8.92" fill="#94d66c"/>
<rect x="434.30" y="223.15" width="11.16" height="8.92" fill="#78f088"/>
<rect x="445.16" y="223.15" width="11.16" height="8.92" fill="#66cc99"/>
<rect x="456.02" y="223.15" width="11.16" height="8.92" fill="#59b1a7"/>
<rect x="466.88" y="223.15" width="11.16" height="8.92" fill="#4b96b4"/>
<rect x="477.73" y="223.15" width="11.16" height="8.92" fill="#3f7ec0"/>
<rect x="488.59" y="223.15" width="11.16" height="8.92" fill="#3263ce"/>
<rect x="499.45" y="223.15" width="11.16" height="8.92" fill="#2b55d5"/>
<rect x="510.31" y="223.15" width="11.16" height="8.92" fill="#2448db"/>
<rect x="521.17" y="223.15" width="11.16" height="8.92" fill="#1c37e4"/>
<rect x="532.02" y="223.15" width="11.16" height="8.92" fill="#152bea"/>
<rect x="542.88" y="223.15" width="11.16" height="8.92" fill="#1428eb"/>
<rect x="553.74" y="223.15" width="11.16" height="8.92" fill="#1223ed"/>
<rect x="564.60" y="223.15" width="11.16" height="8.92" fill="#0f1df0"/>
<rect x="575.45" y="223.15" width="11.16" height="8.92" fill="#0a14f5"/>
<rect x="586.31" y="223.15" width="11.16" height="8.92" fill="#0a14f5"/>
<rect x="597.17" y="223.15" width="11.16" height="8.92" fill="#080ff7"/>
<rect x="608.03" y="223.15" width="11.16" height="8.92" fill="#060bf9"/>
<rect x="618.88" y="223.15" width="11.16" height="8.92" fill="#060cf9"/>
<rect x="629.74" y="223.15" width="11.16" height="8.92" fill="#0409fb"/>
<rect x="358.30" y="231.77" width="11.16" height="8.92" fill="#85f57b"/>
<rect x="369.16" y="231.77" width="11.16" height="8.92" fill="#c5753b"/>
<rect x="380.02" y="231.77" width="11.16" height="8.92" fill="#de4221"/>
<rect x="390.87" y="231.77" width="11.16" height="8.92" fill="#d65229"/>
<rect x="401.73" y="231.77" width="11.16" height="8.92" fill="#c27a3d"/>
<rect x="412.59" y="231.77" width="11.16" height="8.92" fill="#a9ad57"/>
<rect x="423.45" y="231.77" width="11.16" height="8.92" fill="#94d66c"/>
<rect x="434.30" y="231.77" width="11.16" height="8.92" fill="#78f088"/>
<rect x="445.16" y="231.77" width="11.16" height="8.92" fill="#66cc99"/>
<rect x="456.02" y="231.77" width="11.16" height="8.92" fill="#5ab4a6"/>
<rect x="466.88" y="231.77" width="11.16" height="8.92" fill="#4e9bb2"/>
<rect x="477.73" y="231.77" width="11.16" height="8.92" fill="#3f7ec0"/>
<rect x="488.59" y="231.77" width="11.16" height="8.92" fill="#3264cd"/>
<rect x="499.45" y="231.77" width="11.16" height="8.92" fill="#2b55d4"/>
<rect x="510.31" y="231.77" width="11.16" height="8.92" fill="#2346dc"/>
<rect x="521.17" y="231.77" width="11.16" height="8.92" fill="#1b36e4"/>
<rect x="532.02" y="231.77" width="11.16" height="8.92" fill="#162ce9"/>
<rect x="542.88" y="231.77" width="11.16" height="8.92" fill="#1327ec"/>
<rect x="553.74" y="231.77" width="11.16" height="8.92" fill="#1121ee"/>
<rect x="564.60" y="231.77" width="11.16" height="8.92" fill="#0d1af2"/>
<rect x="575.45" y="231.77" width="11.16" height="8.92" fill="#0c18f3"/>
<rect x="586.31" y="231.77" width="11.16" height="8.92" fill="#0a13f6"/>
<rect x="597.17" y="231.77" width="11.16" height="8.92" fill="#0912f6"/>
<rect x="608.03" y="231.77" width="11.16" height="8.92" fill="#070ef8"/>
<rect x="618.88" y="231.77" width="11.16" height="8.92" fill="#0408fb"/>
<rect x="629.74" y="231.77" width="11.16" height="8.92" fill="#0408fb"/>
<rect x="358.30" y="240.39" width="11.16" height="8.92" fill="#85f57b"/>
<rect x="369.16" y="240.39" width="11.16" height="8.92" fill="#c5753b"/>
<rect x="380.02" y="240.39" width="11.16" height="8.92" fill="#de4221"/>
<rect x="390.87" y="240.39" width="11.16" height="8.92" fill="#d94c26"/>
<rect x="401.73" y="240.39" width="11.16" height="8.92" fill="#c5753b"/>
<rect x="412.59" y="240.39" width="11.16" height="8.92" fill="#a9ad57"/>
<rect x="423.45" y="240.39" width="11.16" height="8.92" fill="#92db6e"/>
<rect x="434.30" y="240.39" width="11.16" height="8.92" fill="#78f088"/>
<rect x="445.16" y="240.39" width="11.16" height="8.92" fill="#66cc99"/>
<rect x="456.02" y="240.39" width="11.16" height="8.92" fill="#5bb6a4"/>
<rect x="466.88" y="240.39" width="11.16" height="8.92" fill="#4e9bb2"/>
<rect x="477.73" y="240.39" width="11.16" height="8.92" fill="#3d79c3"/>
<rect x="488.59" y="240.39" width="11.16" height="8.92" fill="#3162ce"/>
<rect x="499.45" y="240.39" width="11.16" height="8.92" fill="#2a54d5"/>
<rect x="510.31" y="240.39" width="11.16" height="8.92" fill="#2142de"/>
<rect x="521.17" y="240.39" width="11.16" height="8.92" fill="#1a34e5"/>
<rect x="532.02" y="240.39" width="11.16" height="8.92" fill="#1427ec"/>
<rect x="542.88" y="240.39" width="11.16" height="8.92" fill="#1326ec"/>
<rect x="553.74" y="240.39" width="11.16" height="8.92" fill="#1121ee"/>
<rect x="564.60" y="240.39" width="11.16" height="8.92" fill="#0e1bf2"/>
<rect x="575.45" y="240.39" width="11.16" height="8.92" fill="#0911f6"/>
<rect x="586.31" y="240.39" width="11.16" height="8.92" fill="#0911f6"/>
<rect x="597.17" y="240.39" width="11.16" height="8.92" fill="#070ff8"/>
<rect x="608.03" y="240.39" width="11.16" height="8.92" fill="#0408fb"/>
<rect x="618.88" y="240.39" width="11.16" height="8.92" fill="#050bfa"/>
<rect x="629.74" y="240.39" width="11.16" height="8.92" fill="#050afa"/>
<rect x="358.30" y="249.02" width="11.16" height="8.92" fill="#85f57b"/>
<rect x="369.16" y="249.02" width="11.16" height="8.92" fill="#c5753b"/>
<rect x="380.02" y="249.02" width="11.16" height="8.92" fill="#de4221"/>
<rect x="390.87" y="249.02" width="11.16" height="8.92" fill="#d94c26"/>
<rect x="401.73" y="249.02" width="11.16" height="8.92" fill="#c5753b"/>
<rect x="412.59" y="249.02" width="11.16" height="8.92" fill="#a9ad57"/>
<rect x="423.45" y="249.02" width="11.16" height="8.92" fill="#92db6e"/>
<rect x="434.30" y="249.02" width="11.16" height="8.92" fill="#78f088"/>
<rect x="445.16" y="249.02" width="11.16" height="8.92" fill="#66cc99"/>
<rect x="456.02" y="249.02" width="11.16" height="8.92" fill="#59b2a6"/>
<rect x="466.88" y="249.02" width="11.16" height="8.92" fill="#4e9cb1"/>
<rect x="477.73" y="249.02" width="11.16" height="8.92" fill="#3d7ac2"/>
<rect x="488.59" y="249.02" width="11.16" height="8.92" fill="#3264cd"/>
<rect x="499.45" y="249.02" width="11.16" height="8.92" fill="#2b57d4"/>
<rect x="510.31" y="249.02" width="11.16" height="8.92" fill="#2346dc"/>
<rect x="521.17" y="249.02" width="11.16" height="8.92" fill="#1a33e6"/>
<rect x="532.02" y="249.02" width="11.16" height="8.92" fill="#1428eb"/>
<rect x="542.88" y="249.02" width="11.16" height="8.92" fill="#1224ed"/>
<rect x="553.74" y="249.02" width="11.16" height="8.92" fill="#0e1df1"/>
<rect x="564.60" y="249.02" width="11.16" height="8.92" fill="#0b15f4"/>
<rect x="575.45" y="249.02" width="11.16" height="8.92" fill="#0911f7"/>
<rect x="586.31" y="249.02" width="11.16" height="8.92" fill="#0810f7"/>
<rect x="597.17" y="249.02" width="11.16" height="8.92" fill="#0409fb"/>
<rect x="608.03" y="249.02" width="11.16" height="8.92" fill="#0509fa"/>
<rect x="618.88" y="249.02" width="11.16" height="8.92" fill="#0407fb"/>
<rect x="629.74" y="249.02" width="11.16" height="8.92" fill="#0203fe"/>
<rect x="358.30" y="257.64" width="11.16" height="8.92" fill="#85f57b"/>
<rect x="369.16" y="257.64" width="11.16" height="8.92" fill="#c5753b"/>
<rect x="380.02" y="257.64" width="11.16" height="8.92" fill="#de4221"/>
<rect x="390.87" y="257.64" width="11.16" height="8.92" fill="#d94c26"/>
<rect x="401.73" y="257.64" width="11.16" height="8.92" fill="#c5753b"/>
<rect x="412.59" y="257.64" width="11.16" height="8.92" fill="#a9ad57"/>
<rect x="423.45" y="257.64" width="11.16" height="8.92" fill="#92db6e"/>
<rect x="434.30" y="257.64" width="11.16" height="8.92" fill="#78f088"/>
<rect x="445.16" y="257.64" width="11.16" height="8.92" fill="#66cc99"/>
<rect x="456.02" y="257.64" width="11.16" height="8.92" fill="#5ab3a6"/>
<rect x="466.88" y="257.64" width="11.16" height="8.92" fill="#4d9ab2"/>
<rect x="477.73" y="257.64" width="11.16" height="8.92" fill="#3d7ac2"/>
<rect x="488.59" y="257.64" width="11.16" height="8.92" fill="#3161cf"/>
<rect x="499.45" y="257.64" width="11.16" height="8.92" fill="#2b56d4"/>
<rect x="510.31" y="257.64" width="11.16" height="8.92" fill="#2345dc"/>
<rect x="521.17" y="257.64" width="11.16" height="8.92" fill="#1c37e4"/>
<rect x="532.02" y="257.64" width="11.16" height="8.92" fill="#1325ed"/>
<rect x="542.88" y="257.64" width="11.16" height="8.92" fill="#1121ef"/>
<rect x="553.74" y="257.64" width="11.16" height="8.92" fill="#0d19f2"/>
<rect x="564.60" y="257.64" width="11.16" height="8.92" fill="#0c17f3"/>
<rect x="575.45" y="257.64" width="11.16" height="8.92" fill="#080ff7"/>
<rect x="586.31" y="257.64" width="11.16" height="8.92" fill="#050afa"/>
<rect x="597.17" y="257.64" width="11.16" height="8.92" fill="#050afa"/>
<rect x="608.03" y="257.64" width="11.16" height="8.92" fill="#050afa"/>
<rect x="618.88" y="257.64" width="11.16" height="8.92" fill="#0408fb"/>
<rect x="629.74" y="257.64" width="11.16" height="8.92" fill="#0204fd"/>
<rect x="358.30" y="266.26" width="11.16" height="8.92" fill="#85f57b"/>
<rect x="369.16" y="266.26" width="11.16" height="8.92" fill="#c5753b"/>
<rect x="380.02" y="266.26" width="11.16" height="8.92" fill="#e13d1f"/>
<rect x="390.87" y="266.26" width="11.16" height="8.92" fill="#d94c26"/>
<rect x="401.73" y="266.26" width="11.16" height="8.92" fill="#c5753b"/>
<rect x="412.59" y="266.26" width="11.16" height="8.92" fill="#a9ad57"/>
<rect x="423.45" y="266.26" width="11.16" height="8.92" fill="#92db6e"/>
<rect x="434.30" y="266.26" width="11.16" height="8.92" fill="#78f088"/>
<rect x="445.16" y="266.26" width="11.16" height="8.92" fill="#66cc99"/>
<rect x="456.02" y="266.26" width="11.16" height="8.92" fill="#59b2a6"/>
<rect x="466.88" y="266.26" width="11.16" height="8.92" fill="#4e9cb2"/>
<rect x="477.73" y="266.26" width="11.16" height="8.92" fill="#3d7ac2"/>
<rect x="488.59" y="266.26" width="11.16" height="8.92" fill="#3264cd"/>
<rect x="499.45" y="266.26" width="11.16" height="8.92" fill="#2850d7"/>
<rect x="510.31" y="266.26" width="11.16" height="8.92" fill="#2040df"/>
<rect x="521.17" y="266.26" width="11.16" height="8.92" fill="#1a35e5"/>
<rect x="532.02" y="266.26" width="11.16" height="8.92" fill="#1326ec"/>
<rect x="542.88" y="266.26" width="11.16" height="8.92" fill="#0f1ef0"/>
<rect x="553.74" y="266.26" width="11.16" height="8.92" fill="#0f1df1"/>
<rect x="564.60" y="266.26" width="11.16" height="8.92" fill="#0b15f5"/>
<rect x="575.45" y="266.26" width="11.16" height="8.92" fill="#0811f7"/>
<rect x="586.31" y="266.26" width="11.16" height="8.92" fill="#0409fb"/>
<rect x="597.17" y="266.26" width="11.16" height="8.92" fill="#050bfa"/>
<rect x="608.03" y="266.26" width="11.16" height="8.92" fill="#0204fd"/>
<rect x="618.88" y="266.26" width="11.16" height="8.92" fill="#0408fb"/>
<rect x="629.74" y="266.26" width="11.16" height="8.92" fill="#0204fd"/>
<rect x="358.30" y="274.88" width="11.16" height="8.92" fill="#85f57b"/>
<rect x="369.16" y="274.88" width="11.16" height="8.92" fill="#c5753b"/>
<rect x="380.02" y="274.88" width="11.16" height="8.92" fill="#e13d1f"/>
<rect x="390.87" y="274.88" width="11.16" height="8.92" fill="#d94c26"/>
<rect x="401.73" y="274.88" width="11.16" height="8.92" fill="#c5753b"/>
<rect x="412.59" y="274.88" width="11.16" height="8.92" fill="#a9ad57"/>
<rect x="423.45" y="274.88" width="11.16" height="8.92" fill="#92db6e"/>
<rect x="434.30" y="274.88" width="11.16" height="8.92" fill="#78f088"/>
<rect x="445.16" y="274.88" width="11.16" height="8.92" fill="#66cc99"/>
<rect x="456.02" y="274.88" width="11.16" height="8.92" fill="#5ab3a6"/>
<rect x="466.88" y="274.88" width="11.16" height="8.92" fill="#4d99b3"/>
<rect x="477.73" y="274.88" width="11.16" height="8.92" fill="#3e7cc1"/>
<rect x="488.59" y="274.88" width="11.16" height="8.92" fill="#3161cf"/>
<rect x="499.45" y="274.88" width="11.16" height="8.92" fill="#284fd7"/>
<rect x="510.31" y="274.88" width="11.16" height="8.92" fill="#2142de"/>
<rect x="521.17" y="274.88" width="11.16" height="8.92" fill="#1931e6"/>
<rect x="532.02" y="274.88" width="11.16" height="8.92" fill="#1223ee"/>
<rect x="542.88" y="274.88" width="11.16" height="8.92" fill="#0f1df0"/>
<rect x="553.74" y="274.88" width="11.16" height="8.92" fill="#0b16f4"/>
<rect x="564.60" y="274.88" width="11.16" height="8.92" fill="#0811f7"/>
<rect x="575.45" y="274.88" width="11.16" height="8.92" fill="#060cf9"/>
<rect x="586.31" y="274.88" width="11.16" height="8.92" fill="#0408fb"/>
<rect x="597.17" y="274.88" width="11.16" height="8.92" fill="#0408fb"/>
<rect x="608.03" y="274.88" width="11.16" height="8.92" fill="#0204fd"/>
<rect x="618.88" y="274.88" width="11.16" height="8.92" fill="#0204fd"/>
<rect x="629.74" y="274.88" width="11.16" height="8.92" fill="#0101fe"/>
<rect x="358.30" y="283.51" width="11.16" height="8.92" fill="#85f57b"/>
<rect x="369.16" y="283.51" width="11.16" height="8.92" fill="#cc6633"/>
<rect x="380.02" y="283.51" width="11.16" height="8.92" fill="#e13d1f"/>
<rect x="390.87" y="283.51" width="11.16" height="8.92" fill="#d94c26"/>
<rect x="401.73" y="283.51" width="11.16" height="8.92" fill="#c5753b"/>
<rect x="412.59" y="283.51" width="11.16" height="8.92" fill="#a9ad57"/>
<rect x="423.45" y="283.51" width="11.16" height="8.92" fill="#92db6e"/>
<rect x="434.30" y="283.51" width="11.16" height="8.92" fill="#78f088"/>
<rect x="445.16" y="283.51" width="11.16" height="8.92" fill="#66cc99"/>
<rect x="456.02" y="283.51" width="11.16" height="8.92" fill="#5ab3a6"/>
<rect x="466.88" y="283.51" width="11.16" height="8.92" fill="#4b96b4"/>
<rect x="477.73" y="283.51" width="11.16" height="8.92" fill="#3c78c3"/>
<rect x="488.59" y="283.51" width="11.16" height="8.92" fill="#305fd0"/>
<rect x="499.45" y="283.51" width="11.16" height="8.92" fill="#2952d6"/>
<rect x="510.31" y="283.51" width="11.16" height="8.92" fill="#2142de"/>
<rect x="521.17" y="283.51" width="11.16" height="8.92" fill="#1830e7"/>
<rect x="532.02" y="283.51" width="11.16" height="8.92" fill="#1224ed"/>
<rect x="542.88" y="283.51" width="11.16" height="8.92" fill="#1021ef"/>
<rect x="553.74" y="283.51" width="11.16" height="8.92" fill="#0a15f5"/>
<rect x="564.60" y="283.51" width="11.16" height="8.92" fill="#0a13f5"/>
<rect x="575.45" y="283.51" width="11.16" height="8.92" fill="#060cf9"/>
<rect x="586.31" y="283.51" width="11.16" height="8.92" fill="#0408fb"/>
<rect x="597.17" y="283.51" width="11.16" height="8.92" fill="#0407fb"/>
<rect x="608.03" y="283.51" width="11.16" height="8.92" fill="#0203fd"/>
<rect x="618.88" y="283.51" width="11.16" height="8.92" fill="#0203fd"/>
<rect x="629.74" y="283.51" width="11.16" height="8.92" fill="#0204fd"/>
<rect x="358.30" y="292.13" width="11.16" height="8.92" fill="#8de573"/>
<rect x="369.16" y="292.13" width="11.16" height="8.92" fill="#d4572c"/>
<rect x="380.02" y="292.13" width="11.16" height="8.92" fill="#eb2914"/>
<rect x="390.87" y="292.13" width="11.16" height="8.92" fill="#de4221"/>
<rect x="401.73" y="292.13" width="11.16" height="8.92" fill="#cf6131"/>
<rect x="412.59" y="292.13" width="11.16" height="8.92" fill="#a9ad57"/>
<rect x="423.45" y="292.13" width="11.16" height="8.92" fill="#92db6e"/>
<rect x="434.30" y="292.13" width="11.16" height="8.92" fill="#80ff80"/>
<rect x="445.16" y="292.13" width="11.16" height="8.92" fill="#6cd694"/>
<rect x="456.02" y="292.13" width="11.16" height="8.92" fill="#5cb8a4"/>
<rect x="466.88" y="292.13" width="11.16" height="8.92" fill="#4c98b3"/>
<rect x="477.73" y="292.13" width="11.16" height="8.92" fill="#3e7bc2"/>
<rect x="488.59" y="292.13" width="11.16" height="8.92" fill="#3263ce"/>
<rect x="499.45" y="292.13" width="11.16" height="8.92" fill="#2951d7"/>
<rect x="510.31" y="292.13" width="11.16" height="8.92" fill="#2040df"/>
<rect x="521.17" y="292.13" width="11.16" height="8.92" fill="#1831e7"/>
<rect x="532.02" y="292.13" width="11.16" height="8.92" fill="#1021ef"/>
<rect x="542.88" y="292.13" width="11.16" height="8.92" fill="#0d1af2"/>
<rect x="553.74" y="292.13" width="11.16" height="8.92" fill="#0913f6"/>
<rect x="564.60" y="292.13" width="11.16" height="8.92" fill="#0911f6"/>
<rect x="575.45" y="292.13" width="11.16" height="8.92" fill="#0509fa"/>
<rect x="586.31" y="292.13" width="11.16" height="8.92" fill="#0204fd"/>
<rect x="597.17" y="292.13" width="11.16" height="8.92" fill="#0001ff"/>
<rect x="608.03" y="292.13" width="11.16" height="8.92" fill="#0205fd"/>
<rect x="618.88" y="292.13" width="11.16" height="8.92" fill="#0204fd"/>
<rect x="629.74" y="292.13" width="11.16" height="8.92" fill="#0103fe"/>
<rect x="358.30" y="300.75" width="11.16" height="8.92" fill="#94d66c"/>
<rect x="369.16" y="300.75" width="11.16" height="8.92" fill="#d94c26"/>
<rect x="380.02" y="300.75" width="11.16" height="8.92" fill="#f5140a"/>
<rect x="390.87" y="300.75" width="11.16" height="8.92" fill="#ed2412"/>
<rect x="401.73" y="300.75" width="11.16" height="8.92" fill="#d65229"/>
<rect x="412.59" y="300.75" width="11.16" height="8.92" fill="#b3994d"/>
<rect x="423.45" y="300.75" width="11.16" height="8.92" fill="#92db6e"/>
<rect x="434.30" y="300.75" width="11.16" height="8.92" fill="#80ff80"/>
<rect x="445.16" y="300.75" width="11.16" height="8.92" fill="#6cd694"/>
<rect x="456.02" y="300.75" width="11.16" height="8.92" fill="#5ab4a6"/>
<rect x="466.88" y="300.75" width="11.16" height="8.92" fill="#4c97b4"/>
<rect x="477.73" y="300.75" width="11.16" height="8.92" fill="#3c77c4"/>
<rect x="488.59" y="300.75" width="11.16" height="8.92" fill="#3161cf"/>
<rect x="499.45" y="300.75" width="11.16" height="8.92" fill="#274ed8"/>
<rect x="510.31" y="300.75" width="11.16" height="8.92" fill="#2040df"/>
<rect x="521.17" y="300.75" width="11.16" height="8.92" fill="#1830e7"/>
<rect x="532.02" y="300.75" width="11.16" height="8.92" fill="#1325ed"/>
<rect x="542.88" y="300.75" width="11.16" height="8.92" fill="#0f1ef0"/>
<rect x="553.74" y="300.75" width="11.16" height="8.92" fill="#0a14f5"/>
<rect x="564.60" y="300.75" width="11.16" height="8.92" fill="#060df9"/>
<rect x="575.45" y="300.75" width="11.16" height="8.92" fill="#060cf9"/>
<rect x="586.31" y="300.75" width="11.16" height="8.92" fill="#0203fd"/>
<rect x="597.17" y="300.75" width="11.16" height="8.92" fill="#0001ff"/>
<rect x="608.03" y="300.75" width="11.16" height="8.92" fill="#0000ff"/>
<rect x="618.88" y="300.75" width="11.16" height="8.92" fill="#0000ff"/>
<rect x="629.74" y="300.75" width="11.16" height="8.92" fill="#0001ff"/>
<rect x="358.30" y="309.38" width="11.16" height="8.92" fill="#94d66c"/>
<rect x="369.16" y="309.38" width="11.16" height="8.92" fill="#d94c26"/>
<rect x="380.02" y="309.38" width="11.16" height="8.92" fill="#f01f0f"/>
<rect x="390.87" y="309.38" width="11.16" height="8.92" fill="#e13d1f"/>
<rect x="401.73" y="309.38" width="11.16" height="8.92" fill="#c08040"/>
<rect x="412.59" y="309.38" width="11.16" height="8.92" fill="#b3994d"/>
<rect x="423.45" y="309.38" width="11.16" height="8.92" fill="#92db6e"/>
<rect x="434.30" y="309.38" width="11.16" height="8.92" fill="#80ff80"/>
<rect x="445.16" y="309.38" width="11.16" height="8.92" fill="#6cd694"/>
<rect x="456.02" y="309.38" width="11.16" height="8.92" fill="#5bb5a5"/>
<rect x="466.88" y="309.38" width="11.16" height="8.92" fill="#4c97b4"/>
<rect x="477.73" y="309.38" width="11.16" height="8.92" fill="#3c78c3"/>
<rect x="488.59" y="309.38" width="11.16" height="8.92" fill="#2f5ed0"/>
<rect x="499.45" y="309.38" width="11.16" height="8.92" fill="#274ed8"/>
<rect x="510.31" y="309.38" width="11.16" height="8.92" fill="#1f3de1"/>
<rect x="521.17" y="309.38" width="11.16" height="8.92" fill="#1830e7"/>
<rect x="532.02" y="309.38" width="11.16" height="8.92" fill="#0f1ef0"/>
<rect x="542.88" y="309.38" width="11.16" height="8.92" fill="#0b17f4"/>
<rect x="553.74" y="309.38" width="11.16" height="8.92" fill="#0811f7"/>
<rect x="564.60" y="309.38" width="11.16" height="8.92" fill="#060bf9"/>
<rect x="575.45" y="309.38" width="11.16" height="8.92" fill="#0408fb"/>
<rect x="586.31" y="309.38" width="11.16" height="8.92" fill="#0103fe"/>
<rect x="597.17" y="309.38" width="11.16" height="8.92" fill="#0102fe"/>
<rect x="608.03" y="309.38" width="11.16" height="8.92" fill="#0001ff"/>
<rect x="618.88" y="309.38" width="11.16" height="8.92" fill="#0101fe"/>
<rect x="629.74" y="309.38" width="11.16" height="8.92" fill="#0102fe"/>
</g>
<rect x="358.40000000000003" y="93.7" width="282.3" height="224.39999999999998" fill="none" stroke="#3c3c3c" stroke-width="0.8"/>
<rect x="358.3" y="350.8" width="282.3" height="11.6" fill="url(#cbar)"/>
<g font-size="6.6" fill="#111" stroke="#222" stroke-width="0.12">
<text x="358.30" y="325.8" text-anchor="middle">0</text>
<line x1="358.30" y1="318" x2="358.30" y2="320" stroke="#222" stroke-width="0.7"/>
<text x="386.53" y="325.8" text-anchor="middle">0.5</text>
<line x1="386.53" y1="318" x2="386.53" y2="320" stroke="#222" stroke-width="0.7"/>
<text x="414.76" y="325.8" text-anchor="middle">1.0</text>
<line x1="414.76" y1="318" x2="414.76" y2="320" stroke="#222" stroke-width="0.7"/>
<text x="442.99" y="325.8" text-anchor="middle">1.5</text>
<line x1="442.99" y1="318" x2="442.99" y2="320" stroke="#222" stroke-width="0.7"/>
<text x="471.22" y="325.8" text-anchor="middle">2.0</text>
<line x1="471.22" y1="318" x2="471.22" y2="320" stroke="#222" stroke-width="0.7"/>
<text x="499.45" y="325.8" text-anchor="middle">2.5</text>
<line x1="499.45" y1="318" x2="499.45" y2="320" stroke="#222" stroke-width="0.7"/>
<text x="527.68" y="325.8" text-anchor="middle">3.0</text>
<line x1="527.68" y1="318" x2="527.68" y2="320" stroke="#222" stroke-width="0.7"/>
<text x="555.91" y="325.8" text-anchor="middle">3.5</text>
<line x1="555.91" y1="318" x2="555.91" y2="320" stroke="#222" stroke-width="0.7"/>
<text x="584.14" y="325.8" text-anchor="middle">4.0</text>
<line x1="584.14" y1="318" x2="584.14" y2="320" stroke="#222" stroke-width="0.7"/>
<text x="612.37" y="325.8" text-anchor="middle">4.5</text>
<line x1="612.37" y1="318" x2="612.37" y2="320" stroke="#222" stroke-width="0.7"/>
<text x="640.60" y="325.8" text-anchor="middle">5.0</text>
<line x1="640.60" y1="318" x2="640.60" y2="320" stroke="#222" stroke-width="0.7"/>
<text x="643" y="96.40">2.5</text>
<line x1="640.6" y1="93.80" x2="642.6" y2="93.80" stroke="#222" stroke-width="0.7"/>
<text x="643" y="118.82">2.0</text>
<line x1="640.6" y1="116.22" x2="642.6" y2="116.22" stroke="#222" stroke-width="0.7"/>
<text x="643" y="141.24">1.5</text>
<line x1="640.6" y1="138.64" x2="642.6" y2="138.64" stroke="#222" stroke-width="0.7"/>
<text x="643" y="163.66">1.0</text>
<line x1="640.6" y1="161.06" x2="642.6" y2="161.06" stroke="#222" stroke-width="0.7"/>
<text x="643" y="186.08">0.5</text>
<line x1="640.6" y1="183.48" x2="642.6" y2="183.48" stroke="#222" stroke-width="0.7"/>
<text x="643" y="208.50">0</text>
<line x1="640.6" y1="205.90" x2="642.6" y2="205.90" stroke="#222" stroke-width="0.7"/>
<text x="643" y="230.92">-0.5</text>
<line x1="640.6" y1="228.32" x2="642.6" y2="228.32" stroke="#222" stroke-width="0.7"/>
<text x="643" y="253.34">-1.0</text>
<line x1="640.6" y1="250.74" x2="642.6" y2="250.74" stroke="#222" stroke-width="0.7"/>
<text x="643" y="275.76">-1.5</text>
<line x1="640.6" y1="273.16" x2="642.6" y2="273.16" stroke="#222" stroke-width="0.7"/>
<text x="643" y="298.18">-2.0</text>
<line x1="640.6" y1="295.58" x2="642.6" y2="295.58" stroke="#222" stroke-width="0.7"/>
<text x="643" y="320.60">-2.5</text>
<line x1="640.6" y1="318.00" x2="642.6" y2="318.00" stroke="#222" stroke-width="0.7"/>
<text x="358.30" y="370" text-anchor="middle">40</text>
<text x="386.53" y="370" text-anchor="middle">52</text>
<text x="414.76" y="370" text-anchor="middle">63</text>
<text x="442.99" y="370" text-anchor="middle">75</text>
<text x="471.22" y="370" text-anchor="middle">86</text>
<text x="499.45" y="370" text-anchor="middle">98</text>
<text x="527.68" y="370" text-anchor="middle">110</text>
<text x="555.91" y="370" text-anchor="middle">121</text>
<text x="584.14" y="370" text-anchor="middle">133</text>
<text x="612.37" y="370" text-anchor="middle">144</text>
<text x="640.60" y="370" text-anchor="middle">155</text>
<text x="499.5" y="337.3" text-anchor="middle" letter-spacing="0.15">millimeters</text>
<text x="499.5" y="384" text-anchor="middle" letter-spacing="0.15">micrometers</text>
<text transform="translate(672.5,205.2) rotate(-90)" text-anchor="middle" font-size="7.9" letter-spacing="0.1">millimeters</text>
</g>
<g font-size="7" fill="#161616" stroke="#222" stroke-width="0.15">
<text x="359.6" y="406.2">Scan width (µm) 5000.000</text>
<text x="359.6" y="423.2">Width micrometers per point (µm) 200.000</text>
<text x="359.6" y="440">Width number of points 26</text>
<text x="532.2" y="406.2">Scan height (µm) 5000.000</text>
<text x="532.2" y="423.2">Height micrometers per point (µm) 200.000</text>
<text x="532.2" y="440">Height number of points 26</text>
</g>
<g font-size="10.5" fill="#4c4c4c">
<text x="66.6" y="372.5">Experiment Time 13:51:00</text>
<text x="66.6" y="399.5">Experiment Date 10/10/08</text>
<text x="66.6" y="423.9">Experiment Duration 01:01:22</text>
</g>
<g>
<path d="M29.2,477.6 h14.8 v15.8 q0,7.2 -7.4,7.2 q-7.4,0 -7.4,-7.2 z" fill="#9a9a9a"/>
<path d="M33.6,477.6 v15.4 q0,3 3,3 q3,0 3,-3 v-15.4" fill="none" stroke="#c8c8c8" stroke-width="0.9"/>
<line x1="36.6" y1="477.6" x2="36.6" y2="496" stroke="#c8c8c8" stroke-width="0.7"/>
<text x="47.6" y="500.2" font-size="9.7" font-weight="bold" fill="#8a8a8a" textLength="102.2" lengthAdjust="spacingAndGlyphs" word-spacing="-1">uniscan instruments</text>
</g>
</svg>
<div style="position:absolute;left:702.6px;top:0;width:1.4px;height:532px;background:#000;"></div>
</body></html>
